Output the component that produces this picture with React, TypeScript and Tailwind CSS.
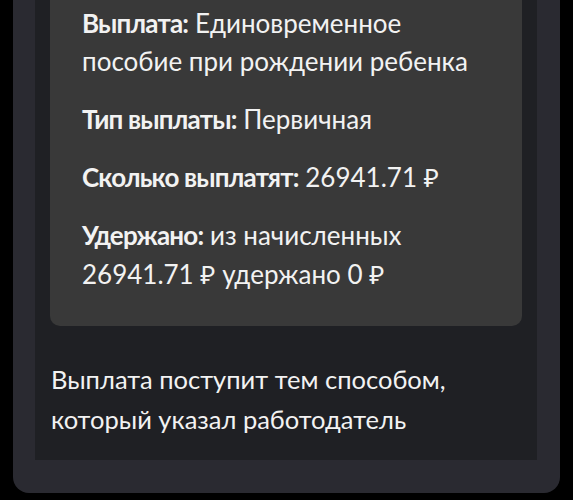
export default function App() {
  const rows: { label: string; value: string }[] = [
    { label: "Выплата:", value: "Единовременное пособие при рождении ребенка" },
    { label: "Тип выплаты:", value: "Первичная" },
    { label: "Сколько выплатят:", value: "26941.71 ₽" },
    { label: "Удержано:", value: "из начисленных 26941.71 ₽ удержано 0 ₽" },
  ];
  return (
    <div className="min-h-[500px] w-[573px] bg-black overflow-hidden" style={{ fontFamily: "Lato, 'Noto Sans', sans-serif" }}>
      <div className="ml-[13px] mr-[13px] pl-[22px] pr-[23px] pb-[33px] bg-[#2a2a31] rounded-b-[16px]">
        <div className="bg-[#1f2024] px-[15px] pb-[21px]">
          <div className="bg-[#393939] rounded-b-[10px] pl-[32px] pr-[42px] pt-[4px] pb-[33px] text-[26px] leading-[38.4px] text-[#f2f2f2] flex flex-col gap-[19.5px]">
            {rows.map((r) => (
              <p key={r.label}>
                <span className="font-bold tracking-[-0.8px]">{r.label}</span> {r.value}
              </p>
            ))}
          </div>
          <p className="mt-[33px] pl-[1px] pr-[60px] text-[25.5px] leading-[40px] text-[#f2f2f2]">
            Выплата поступит тем способом, который указал работодатель
          </p>
        </div>
      </div>
    </div>
  );
}
